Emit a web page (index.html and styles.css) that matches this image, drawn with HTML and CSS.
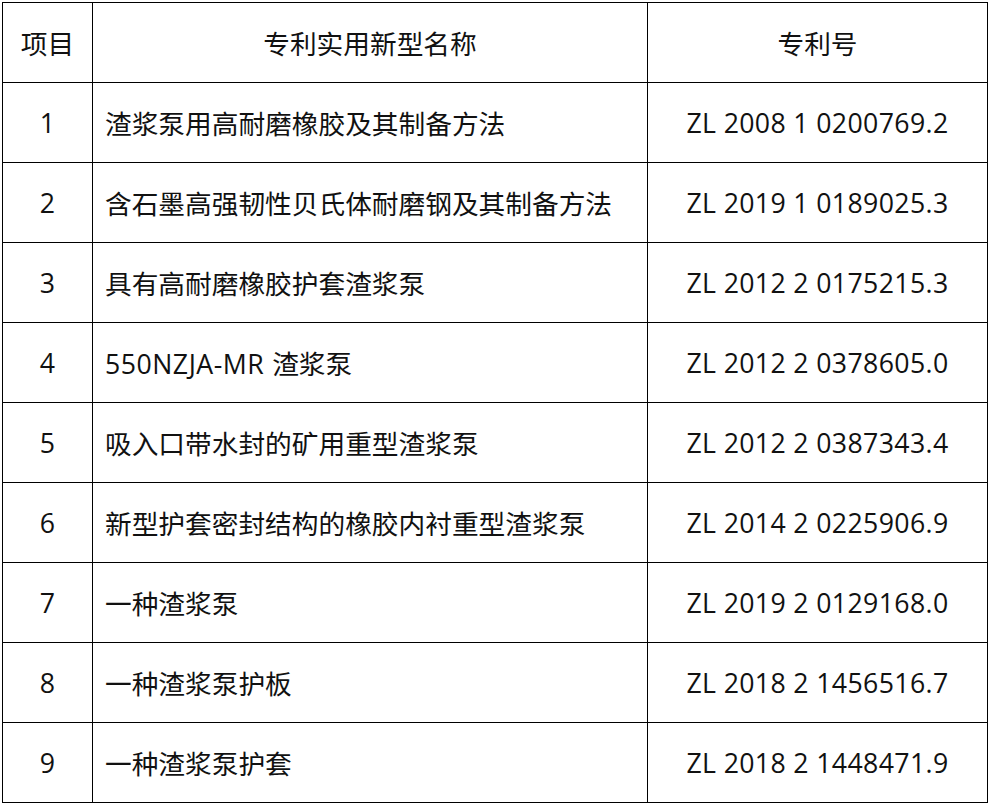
FILE: index.html
```html
<!DOCTYPE html>
<html lang="zh-CN">
<head>
<meta charset="utf-8">
<title>专利列表</title>
<link rel="stylesheet" href="styles.css">
</head>
<body>
<div class="wrap">
<table class="patents">
  <colgroup>
    <col class="c-no">
    <col class="c-name">
    <col class="c-id">
  </colgroup>
  <thead>
    <tr><th>项目</th><th>专利实用新型名称</th><th>专利号</th></tr>
  </thead>
  <tbody>
    <tr><td class="no">1</td><td class="name">渣浆泵用高耐磨橡胶及其制备方法</td><td class="id">ZL 2008 1 0200769.2</td></tr>
    <tr><td class="no">2</td><td class="name">含石墨高强韧性贝氏体耐磨钢及其制备方法</td><td class="id">ZL 2019 1 0189025.3</td></tr>
    <tr><td class="no">3</td><td class="name">具有高耐磨橡胶护套渣浆泵</td><td class="id">ZL 2012 2 0175215.3</td></tr>
    <tr><td class="no">4</td><td class="name"><span class="latin">550NZJA-MR</span> 渣浆泵</td><td class="id">ZL 2012 2 0378605.0</td></tr>
    <tr><td class="no">5</td><td class="name">吸入口带水封的矿用重型渣浆泵</td><td class="id">ZL 2012 2 0387343.4</td></tr>
    <tr><td class="no">6</td><td class="name">新型护套密封结构的橡胶内衬重型渣浆泵</td><td class="id">ZL 2014 2 0225906.9</td></tr>
    <tr><td class="no">7</td><td class="name">一种渣浆泵</td><td class="id">ZL 2019 2 0129168.0</td></tr>
    <tr><td class="no">8</td><td class="name">一种渣浆泵护板</td><td class="id">ZL 2018 2 1456516.7</td></tr>
    <tr><td class="no">9</td><td class="name">一种渣浆泵护套</td><td class="id">ZL 2018 2 1448471.9</td></tr>
  </tbody>
</table>
</div>
</body>
</html>
```
FILE: styles.css
```css
html, body {
  margin: 0;
  padding: 0;
  background: #ffffff;
}
.wrap {
  padding: 2px 0 0 2px;
}
.patents {
  border-collapse: collapse;
  table-layout: fixed;
  width: 985px;
  font-family: "Open Sans", "Noto Sans CJK SC", sans-serif;
  font-size: 26.7px;
  color: #111111;
}
.c-no { width: 90px; }
.c-name { width: 555px; }
.c-id { width: 340px; }
.patents th,
.patents td {
  border: 1px solid #000000;
  height: 79px;
  padding: 0;
  vertical-align: middle;
  font-weight: normal;
  text-align: center;
  white-space: nowrap;
}
.patents td.name {
  text-align: left;
  padding-left: 12px;
}
.patents td.id {
  letter-spacing: 0.35px;
}
.latin {
  letter-spacing: 0.5px;
  margin-right: 1px;
}
```
